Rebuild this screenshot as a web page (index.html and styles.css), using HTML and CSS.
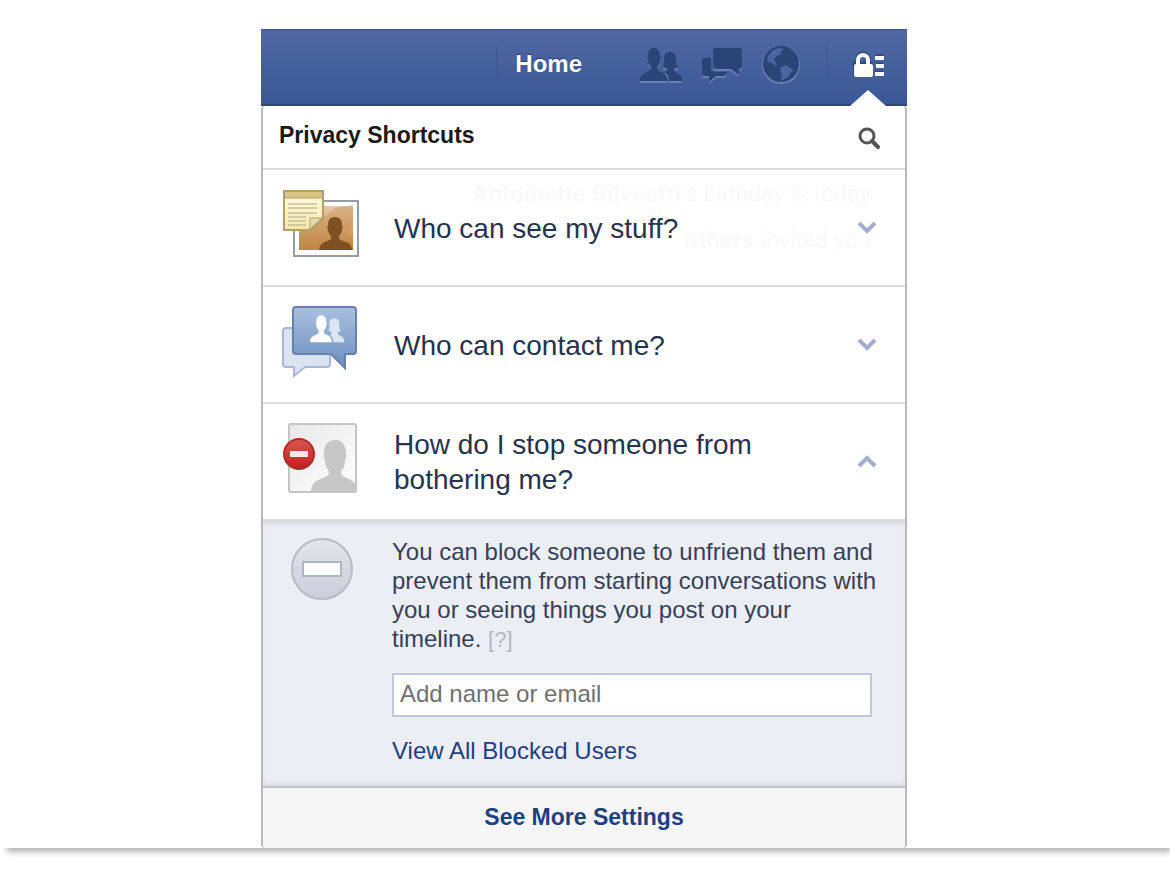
FILE: index.html
```html
<!DOCTYPE html>
<html lang="en">
<head>
    <meta charset="UTF-8">
    <meta name="viewport" content="width=device-width, initial-scale=1">
    <title>Privacy Shortcuts</title>
    <link rel="stylesheet" href="styles.css">
</head>

<body>
    <div class="slide">
        <div class="window">
            <header class="topbar">
                <a class="home" href="#">Home</a>
                <nav class="jewels">
                    <button type="button" class="jewel" aria-label="Friend Requests">
                        <svg width="44" height="40" viewBox="0 0 44 40">
                            <defs>
                                <path id="friend-front" d="M1 37c0-5 2-7 7-9 3-1 4-2 4-5-2-2-3-4-3-7-1-1-1-3 0-4 0-6 3-8 6-8s6 2 6 8c1 1 1 3 0 4 0 3-1 5-3 7 0 3 1 4 4 5 4 2 6 4 6 9z"></path>
                                <path id="friend-back" d="M30 37c0-5-2-7-5-9 2-1 3-1 3-3-1-1-3-1-4-2 1-2 1-5 1-8 0-5 2-7 6-7s6 2 6 7c0 3 0 6 2 8-1 1-3 1-4 2 0 2 1 3 3 4 3 1 5 3 5 8z"></path>
                            </defs>
                            <g class="emboss" transform="translate(0 2)">
                                <use href="#friend-front"></use>
                                <use href="#friend-back"></use>
                            </g>
                            <use class="glyph" href="#friend-front"></use>
                            <use class="glyph" href="#friend-back"></use>
                        </svg>
                    </button>
                    <button type="button" class="jewel" aria-label="Messages">
                        <svg width="44" height="40" viewBox="0 0 44 40">
                            <defs>
                                <path id="chat-front" d="M16 4h24a3 3 0 0 1 2 3v15a3 3 0 0 1-3 3v6l-8-6H16a3 3 0 0 1-3-3V7a3 3 0 0 1 3-3z"></path>
                                <path id="chat-back" d="M4 14h7v10c0 3 2 4 5 4h11c-1 3-2 4-4 4h-7l-7 6v-6H4a2 2 0 0 1-2-2V16a2 2 0 0 1 2-2z"></path>
                            </defs>
                            <g class="emboss" transform="translate(0 2)">
                                <use href="#chat-front"></use>
                                <use href="#chat-back"></use>
                            </g>
                            <use class="glyph" href="#chat-front"></use>
                            <use class="glyph" href="#chat-back"></use>
                        </svg>
                    </button>
                    <button type="button" class="jewel" aria-label="Notifications">
                        <svg width="40" height="40" viewBox="0 0 40 40">
                            <circle class="emboss" cx="20" cy="21" r="19"></circle>
                            <circle class="glyph" cx="20" cy="20" r="18"></circle>
                            <path class="land" d="M6 15c2-6 6-10 12-11l5 1-4 3 2 2-4 1-3 3-1 3 3 2-1 3-4-3-4-1z"></path>
                            <path class="land" d="M20 23l5-2 7 5c0 1-1 2-2 2l-2 4-7 5-2-2 2-4-2-4z"></path>
                        </svg>
                    </button>
                </nav>
                <button type="button" class="privacy" aria-label="Privacy Shortcuts" aria-expanded="true">
                    <svg width="34" height="28" viewBox="0 0 34 28">
                        <g class="lock-edge">
                            <rect x="3" y="13" width="18" height="13" rx="1"></rect>
                            <path d="M7 14V9a5 5 0 0 1 10 0v5M24 7h8M25 15h7M24 23h8"></path>
                        </g>
                        <g class="lock">
                            <rect x="3" y="14" width="19" height="13" rx="2"></rect>
                            <path d="M7 15v-5a5 5 0 0 1 10 0v5M24 8h9M25 16h8M24 24h9"></path>
                        </g>
                    </svg>
                </button>
            </header>

            <main class="flyout">
                <div class="feed" aria-hidden="true">
                    <p><b>Antoinette Silvestri</b>'s birthday is today</p>
                    <p><b>others</b> invited you</p>
                </div>

                <div class="title-row">
                    <h1>Privacy Shortcuts</h1>
                    <button type="button" class="search" aria-label="Search">
                        <svg width="24" height="24" viewBox="0 0 24 24">
                            <circle cx="10" cy="10" r="7" fill="none" stroke="#555" stroke-width="3"></circle>
                            <path d="M15 15l6 6" stroke="#555" stroke-width="4" stroke-linecap="round"></path>
                        </svg>
                    </button>
                </div>

                <button type="button" class="item" aria-expanded="false">
                    <svg class="item-icon" width="80" height="76" viewBox="0 0 80 76">
                        <defs>
                            <linearGradient id="photo" x1="0" y1="0" x2="0" y2="1">
                                <stop offset="0" stop-color="#e6c9ad"></stop>
                                <stop offset="1" stop-color="#bd7d34"></stop>
                            </linearGradient>
                            <linearGradient id="note" x1="0" y1="0" x2="0" y2="1">
                                <stop offset="0" stop-color="#fffbe4"></stop>
                                <stop offset="1" stop-color="#f8e8a4"></stop>
                            </linearGradient>
                        </defs>
                        <rect x="12" y="12" width="64" height="55" fill="#fff" stroke="#979ba3" stroke-width="2"></rect>
                        <rect x="17" y="17" width="54" height="44" fill="url(#photo)"></rect>
                        <path d="M17 45l17-15 10-3 9-8 18-3v20L48 61H17z" fill="#c99052" opacity=".4"></path>
                        <path d="M37 61c1-6 4-8 9-9 3-1 3-3 3-5-2-2-3-4-3-7-1-1-1-3 0-4 0-5 2-8 7-8s7 3 7 8c1 1 1 3 0 4 0 3-1 5-3 7 0 2 0 4 4 5 5 1 8 3 9 9z" fill="#805022"></path>
                        <path d="M2 2h39v27L29 41H2z" fill="url(#note)" stroke="#b2a065" stroke-width="2"></path>
                        <path d="M3 3h37v6H3z" fill="#d8c485"></path>
                        <path d="M3 9h37" stroke="#b2a065"></path>
                        <path d="M6 15h29M6 19h29M6 24h29M6 28h18M6 32h18M6 36h18" stroke="#a9a58e"></path>
                        <path d="M28 40V29h12z" fill="#dfdbb0" stroke="#b2a065"></path>
                    </svg>
                    <span class="item-label">Who can see my stuff?</span>
                    <svg class="chevron" width="20" height="14" viewBox="0 0 20 14"><path d="M2 3l8 8 8-8"></path></svg>
                </button>

                <button type="button" class="item" aria-expanded="false">
                    <svg class="item-icon" width="80" height="76" viewBox="0 0 80 76">
                        <defs>
                            <linearGradient id="bubble" x1="0" y1="0" x2="0" y2="1">
                                <stop offset="0" stop-color="#a9c0df"></stop>
                                <stop offset="1" stop-color="#6e8fc2"></stop>
                            </linearGradient>
                        </defs>
                        <path d="M4 22h41a3 3 0 0 1 3 3v33a3 3 0 0 1-3 3H23L12 70v-9H4a3 3 0 0 1-3-3V25a3 3 0 0 1 3-3z" fill="#dbe3f0" stroke="#a9b9d5" stroke-width="2"></path>
                        <path d="M14 1h57a3 3 0 0 1 3 3v41a3 3 0 0 1-3 3h-8v14L49 48H14a3 3 0 0 1-3-3V4a3 3 0 0 1 3-3z" fill="url(#bubble)" stroke="#6681b1" stroke-width="2"></path>
                        <g transform="translate(27 6) scale(.82)">
                            <use href="#friend-back" fill="#dce6f3"></use>
                            <use href="#friend-front" fill="#fff"></use>
                        </g>
                    </svg>
                    <span class="item-label">Who can contact me?</span>
                    <svg class="chevron" width="20" height="14" viewBox="0 0 20 14"><path d="M2 3l8 8 8-8"></path></svg>
                </button>

                <button type="button" class="item" aria-expanded="true">
                    <svg class="item-icon" width="80" height="76" viewBox="0 0 80 76">
                        <defs>
                            <linearGradient id="card" x1="0" y1="0" x2="1" y2="1">
                                <stop offset="0" stop-color="#e8e8e8"></stop>
                                <stop offset="1" stop-color="#fff"></stop>
                            </linearGradient>
                            <linearGradient id="stop" x1="0" y1="0" x2="0" y2="1">
                                <stop offset="0" stop-color="#d9584f"></stop>
                                <stop offset="1" stop-color="#c01e20"></stop>
                            </linearGradient>
                        </defs>
                        <rect x="7" y="1" width="67" height="68" rx="2" fill="url(#card)" stroke="#c4c4c4" stroke-width="2"></rect>
                        <path d="M29 68c1-8 4-10 12-13 5-2 6-3 6-7-3-3-4-6-4-11-1-2-2-4-1-6 0-9 4-14 11-14s11 5 11 14c1 2 0 4-1 6 0 5-1 8-4 11 0 4 1 5 6 7 5 2 6 3 8 6v7z" fill="#c7c7c7"></path>
                        <circle cx="17" cy="31" r="15" fill="url(#stop)" stroke="#b3292a" stroke-width="2"></circle>
                        <rect x="8" y="28" width="18" height="6" fill="#fbe9e8"></rect>
                    </svg>
                    <span class="item-label">How do I stop someone from bothering me?</span>
                    <svg class="chevron" width="20" height="14" viewBox="0 0 20 14"><path d="M2 12l8-8 8 8"></path></svg>
                </button>

                <section class="block-panel">
                    <svg class="block-icon" width="64" height="64" viewBox="0 0 64 64">
                        <defs>
                            <linearGradient id="disc" x1="0" y1="0" x2="0" y2="1">
                                <stop offset="0" stop-color="#e3e5ea"></stop>
                                <stop offset="1" stop-color="#c9cedb"></stop>
                            </linearGradient>
                        </defs>
                        <circle cx="32" cy="32" r="30" fill="url(#disc)" stroke="#b9bbc2" stroke-width="2"></circle>
                        <rect x="13" y="25" width="38" height="14" fill="#fff" stroke="#b0b5c2" stroke-width="2"></rect>
                    </svg>
                    <form class="block-form">
                        <p>You can block someone to unfriend them and prevent them from starting conversations with you or seeing things you post on your timeline. <a class="help" href="#">[?]</a></p>
                        <input type="text" placeholder="Add name or email" aria-label="Add name or email">
                        <a class="blocked-link" href="#">View All Blocked Users</a>
                    </form>
                </section>

                <a class="more" href="#">See More Settings</a>
            </main>
        </div>
    </div>
</body>
</html>
```
FILE: styles.css
```css
:root {
    --link: #1f3f83;
    --text: #26334f;
    --line: #dcdcdc;
    --edge: #b9b9bb;
}

* {
    box-sizing: border-box;
}

body {
    min-height: 100vh;
    margin: 0;
    padding-bottom: 24px;
    background: #fff;
    color: var(--text);
    font-family: "Liberation Sans", Arial, sans-serif;
}

.slide {
    margin-left: 2px;
    padding: 29px 4px 0 0;
    background: #fff;
    box-shadow: 3px 6px 6px -2px rgba(0, 0, 0, 0.3);
}

.window {
    max-width: 646px;
    margin: 0 auto;
}

button {
    padding: 0;
    border: none;
    background: none;
    color: inherit;
    font: inherit;
    cursor: pointer;
}

a {
    text-decoration: none;
}

svg {
    display: block;
}

/* Blue bar */
.topbar {
    display: flex;
    align-items: center;
    justify-content: flex-end;
    height: 77px;
    padding: 0 22px 6px 0;
    background: linear-gradient(#4e69a2, #3b5796);
    border-top: 1px solid #3c5283;
    border-bottom: 2px solid #2f467f;
}

.home {
    padding: 4px 0 4px 18px;
    border-left: 1px solid #3d568f;
    color: #fff;
    font-size: 24px;
    font-weight: bold;
    text-shadow: 0 -1px 1px #263c70;
}

.jewels {
    display: flex;
    gap: 17px;
    margin: 0 25px 0 57px;
}

.glyph {
    fill: #2b4478;
}

.emboss {
    fill: #6780b5;
}

.land {
    fill: #4a659f;
}

.privacy {
    position: relative;
    padding: 4px 0 4px 24px;
    border-left: 1px solid #3d568f;
}

/* White arrow that joins the bar to the flyout */
.privacy::after {
    content: '';
    position: absolute;
    right: -1px;
    bottom: -24px;
    border: solid transparent;
    border-width: 0 18px 16px;
    border-bottom-color: #fff;
}

.lock {
    fill: #fff;
}

.lock path {
    fill: none;
    stroke: #fff;
    stroke-width: 4;
}

.lock-edge {
    fill: #2b4684;
    stroke: #2b4684;
    stroke-width: 2;
}

.lock-edge path {
    fill: none;
    stroke-width: 5;
}

/* Flyout */
.flyout {
    position: relative;
    z-index: 0;
    border: solid var(--edge);
    border-width: 0 2px;
    border-radius: 4px;
    background: #fff;
    overflow: hidden;
}

.feed {
    position: absolute;
    z-index: -1;
    top: 71px;
    right: 34px;
    color: #f9f9fa;
    font-size: 23px;
    line-height: 34px;
    text-align: right;
}

.feed p {
    margin: 0 0 12px;
}

.title-row {
    display: flex;
    align-items: center;
    justify-content: space-between;
    height: 64px;
    padding: 0 24px 4px 16px;
    border-bottom: 2px solid var(--line);
}

.title-row h1 {
    margin: 0;
    color: #1a1a1a;
    font-size: 23px;
}

.search {
    padding-top: 6px;
}

.item {
    display: flex;
    align-items: center;
    width: 100%;
    padding: 19px 28px 20px 19px;
    border-bottom: 2px solid var(--line);
    text-align: left;
}

.item-icon {
    flex: none;
}

.item-label {
    flex: 1;
    padding: 2px 80px 0 32px;
    font-size: 28px;
    line-height: 35px;
}

.chevron {
    fill: none;
    stroke: #a3aece;
    stroke-width: 4;
}

/* Opened section */
.block-panel {
    display: flex;
    gap: 38px;
    padding: 16px 33px 21px 27px;
    background: #ebeef4;
    box-shadow: inset 0 5px 5px -3px #d3d6dc, inset 0 -5px 5px -3px #d9dce3;
}

.block-icon {
    flex: none;
}

.block-form {
    flex: 1;
    font-size: 24px;
    line-height: 29px;
}

/* The text runs a little wider than the box under it */
.block-form p {
    margin: 0 -10px 19px 0;
    color: #364058;
}

.help {
    color: #b5b8bf;
    font-size: 22px;
}

.block-form input {
    display: block;
    width: 100%;
    height: 44px;
    padding: 0 6px 2px;
    border: 2px solid #bdc7dd;
    background: #fff;
    font: inherit;
}

.block-form input::placeholder {
    color: #707070;
    opacity: 1;
}

.blocked-link {
    display: inline-block;
    margin-top: 19px;
    color: var(--link);
}

.more {
    display: block;
    padding: 14px 0 16px;
    border-top: 2px solid #c4c5c9;
    background: #f6f6f6;
    color: var(--link);
    font-size: 23px;
    font-weight: bold;
    line-height: 30px;
    text-align: center;
}
```
